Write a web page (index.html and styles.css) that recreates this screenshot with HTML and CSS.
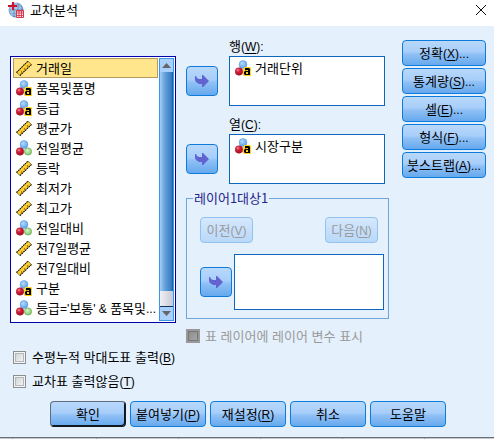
FILE: index.html
```html
<!DOCTYPE html>
<html lang="ko">
<head>
<meta charset="utf-8">
<title>교차분석</title>
<link rel="stylesheet" href="styles.css">
</head>
<body>
<svg class="defs" aria-hidden="true">
  <defs>
    <radialGradient id="blue" cx=".4" cy=".35" r=".65"><stop offset="0" stop-color="#b5dcff"/><stop offset="1" stop-color="#5c9fe4"/></radialGradient>
    <radialGradient id="red" cx=".35" cy=".3" r=".7"><stop offset="0" stop-color="#f08a98"/><stop offset=".4" stop-color="#d02038"/><stop offset="1" stop-color="#a80c22"/></radialGradient>
    <radialGradient id="green" cx=".4" cy=".35" r=".65"><stop offset="0" stop-color="#d4f5c0"/><stop offset="1" stop-color="#86c870"/></radialGradient>
    <linearGradient id="globe" x1="0" y1="0" x2="1" y2="1"><stop offset="0" stop-color="#a9c8e8"/><stop offset="1" stop-color="#2f6dab"/></linearGradient>
    <symbol id="scale" viewBox="0 0 16 16">
      <path d="M.5 12.500 12 1l3.500 3.500L4 15.500z" fill="#ffc820"/>
      <path d="M.5 12.500 12 1l3.500 3.500L4 15.500z" fill="none" stroke="#77704a" stroke-width=".8"/>
      <path d="M.5 12.500 12 1M4 15.500 15.500 4.500" fill="none" stroke="#111" stroke-width="1.100" stroke-dasharray="1.400 1"/>
      <path d="M3 12.500 12.500 3" stroke="#ffe678" stroke-width="1" stroke-dasharray="2 1.500"/>
      <path d="M5 12h1M8 9h1M11 6h1" stroke="#5c4600" stroke-width="1"/>
    </symbol>
    <symbol id="nominal" viewBox="0 0 16 16">
      <circle cx="8" cy="4.500" r="3.900" fill="url(#blue)" stroke="#5b9de0" stroke-width=".6"/>
      <circle cx="4" cy="11.500" r="3.800" fill="url(#red)" stroke="#a51328" stroke-width=".5"/>
      <circle cx="12" cy="11.500" r="3.600" fill="url(#green)" stroke="#61a653" stroke-width=".7"/>
    </symbol>
    <symbol id="string" viewBox="0 0 16 16">
      <circle cx="8" cy="4.500" r="3.900" fill="url(#blue)" stroke="#5b9de0" stroke-width=".6"/>
      <circle cx="4" cy="11.500" r="3.800" fill="url(#red)" stroke="#a51328" stroke-width=".5"/>
      <path d="M9 7h6l1 1v8H9l-1-1v-4z" fill="#ffd21c"/>
      <path d="M10 8h4l1 1v6h-5l-1-1v-2l1-1h3v-1h-1l-2 .5z" fill="#000"/>
      <path d="M11 12h2v2h-2z" fill="#ffd21c"/>
    </symbol>
    <symbol id="arrow" viewBox="0 0 14 14">
      <path d="M0 2h1l1 2 2 1h3V1h1l6 6-6 6H7V10H4L1 8 0 6z" fill="#6262d0"/>
    </symbol>
  </defs>
</svg>
<div class="dialog">
  <header class="titlebar">
    <svg class="app-icon" viewBox="0 0 16 16" aria-hidden="true">
      <circle cx="8" cy="8" r="7.500" fill="url(#globe)"/>
      <path d="M2 10h12M3 13h10M8 1v14M4 4v9M12 3v10M2 6h12" stroke="#dfeaf6" stroke-width=".6"/>
      <path d="M4 0h2v3h3v2H6v3H4V5H0V3h4z" fill="#d0142e"/>
      <path d="M8.500 8.500h7v7h-7z" fill="#fbe4e7" stroke="#d33a50"/>
      <path d="M8 9h8M9 11h6M9 13.500h6M11 9v6M13.500 9v6" stroke="#d33a50" stroke-width=".9"/>
    </svg>
    <h1>교차분석</h1>
    <button class="close" type="button" aria-label="닫기"><svg viewBox="0 0 10 10"><path d="M0 0l10 10M10 0L0 10" stroke="#111" fill="none"/></svg></button>
  </header>
  <main class="content">
    <section class="source">
      <div class="variables">
        <ul class="items" role="listbox" aria-label="변수">
          <li class="item selected" role="option" aria-selected="true"><svg class="icon"><use href="#scale"/></svg>거래일</li>
          <li class="item" role="option"><svg class="icon"><use href="#string"/></svg>품목및품명</li>
          <li class="item" role="option"><svg class="icon"><use href="#string"/></svg>등급</li>
          <li class="item" role="option"><svg class="icon"><use href="#scale"/></svg>평균가</li>
          <li class="item" role="option"><svg class="icon"><use href="#nominal"/></svg>전일평균</li>
          <li class="item" role="option"><svg class="icon"><use href="#scale"/></svg>등락</li>
          <li class="item" role="option"><svg class="icon"><use href="#scale"/></svg>최저가</li>
          <li class="item" role="option"><svg class="icon"><use href="#scale"/></svg>최고가</li>
          <li class="item" role="option"><svg class="icon"><use href="#nominal"/></svg>전일대비</li>
          <li class="item" role="option"><svg class="icon"><use href="#scale"/></svg>전7일평균</li>
          <li class="item" role="option"><svg class="icon"><use href="#scale"/></svg>전7일대비</li>
          <li class="item" role="option"><svg class="icon"><use href="#string"/></svg>구분</li>
          <li class="item" role="option"><svg class="icon"><use href="#nominal"/></svg><span>등급<span class="latin">='</span>보통<span class="latin">' &amp; </span>품목및<span class="latin">...</span></span></li>
        </ul>
        <div class="scrollbar">
          <button class="step" type="button" aria-label="위로"><svg viewBox="0 0 9 5"><path d="M0 5l4.500-5L9 5z" fill="#666"/></svg></button>
          <div class="track"></div>
          <div class="grip"></div>
          <button class="step" type="button" aria-label="아래로"><svg viewBox="0 0 9 5"><path d="M0 0l4.500 5L9 0z" fill="#666"/></svg></button>
        </div>
      </div>
      <div class="options">
        <label class="check"><input type="checkbox"><span>수평누적 막대도표 출력<span class="latin">(<u>B</u>)</span></span></label>
        <label class="check"><input type="checkbox"><span>교차표 출력않음<span class="latin">(<u>T</u>)</span></span></label>
      </div>
    </section>
    <section class="targets">
      <div class="target">
        <button class="btn move" type="button" aria-label="행으로 이동"><svg><use href="#arrow"/></svg></button>
        <div class="field">
          <span class="caption" id="rows">행<span class="latin">(<u>W</u>):</span></span>
          <ul class="box" role="listbox" aria-labelledby="rows"><li class="item" role="option"><svg class="icon"><use href="#string"/></svg>거래단위</li></ul>
        </div>
      </div>
      <div class="target">
        <button class="btn move" type="button" aria-label="열로 이동"><svg><use href="#arrow"/></svg></button>
        <div class="field">
          <span class="caption" id="cols">열<span class="latin">(<u>C</u>):</span></span>
          <ul class="box" role="listbox" aria-labelledby="cols"><li class="item" role="option"><svg class="icon"><use href="#string"/></svg>시장구분</li></ul>
        </div>
      </div>
      <fieldset class="layer">
        <legend>레이어1대상1</legend>
        <div class="paging">
          <button class="btn" type="button" disabled>이전<span class="latin">(<u>V</u>)</span></button>
          <button class="btn" type="button" disabled>다음<span class="latin">(<u>N</u>)</span></button>
        </div>
        <div class="layer-target">
          <button class="btn move" type="button" aria-label="레이어로 이동"><svg><use href="#arrow"/></svg></button>
          <ul class="box" role="listbox" aria-label="레이어"></ul>
        </div>
      </fieldset>
      <label class="check off"><input type="checkbox" disabled><span>표 레이어에 레이어 변수 표시</span></label>
    </section>
    <nav class="settings">
      <button class="btn" type="button">정확<span class="latin">(<u>X</u>)...</span></button>
      <button class="btn" type="button">통계량<span class="latin">(<u>S</u>)...</span></button>
      <button class="btn" type="button">셀<span class="latin">(<u>E</u>)...</span></button>
      <button class="btn" type="button">형식<span class="latin">(<u>F</u>)...</span></button>
      <button class="btn" type="button">붓스트랩<span class="latin">(<u>A</u>)...</span></button>
    </nav>
  </main>
  <footer class="actions">
    <button class="btn default" type="submit">확인</button>
    <button class="btn" type="button">붙여넣기<span class="latin">(<u>P</u>)</span></button>
    <button class="btn" type="button">재설정<span class="latin">(<u>R</u>)</span></button>
    <button class="btn" type="button">취소</button>
    <button class="btn" type="button">도움말</button>
  </footer>
  <div class="sheet-edge"></div>
</div>
</body>
</html>
```
FILE: styles.css
```css
* { box-sizing: border-box; }

body {
  margin: 0;
  background: #e4f0fc;
  color: #000;
  font: 13px/16px "Noto Sans CJK KR", sans-serif;
}

ul { margin: 0; padding: 0; list-style: none; }

button {
  padding: 0;
  font: inherit;
  color: inherit;
}

.defs { position: absolute; width: 0; height: 0; }

.latin {
  font-family: "Liberation Sans", sans-serif;
  font-size: 12px;
  line-height: 1;
  white-space: pre;
}

u { text-underline-offset: 2px; }

.dialog {
  display: flex;
  flex-direction: column;
  min-height: 100vh;
}

.titlebar {
  display: flex;
  align-items: center;
  gap: 6px;
  height: 26px;
  padding: 0 8px 6px;
  background: #fff;
}

.app-icon { width: 16px; height: 16px; }

.titlebar h1 {
  flex: 1;
  margin: 0;
  font-size: 13px;
  font-weight: 400;
}

.close {
  width: 10px;
  height: 10px;
  border: 0;
  background: none;
}

.close svg { display: block; width: 10px; height: 10px; }

.content {
  display: grid;
  grid-template-columns: minmax(0, 166fr) minmax(0, 203fr) 87px;
  gap: 10px;
  padding: 12px 8px 12px 10px;
}

.source { padding-top: 18px; }

.variables {
  display: flex;
  gap: 1px;
  height: 267px;
  padding: 1px;
  border: 1px solid #0000a8;
  background: #fff;
}

.items { flex: 1; min-width: 0; padding-left: 1px; }

.item {
  display: flex;
  align-items: center;
  gap: 4px;
  height: 20px;
  padding: 0 2px;
  border: 1px solid transparent;
  white-space: nowrap;
}

.item.selected { border-color: #b39b5e; background: #ffe68c; }

.icon { flex: none; width: 16px; height: 16px; }

.scrollbar {
  display: flex;
  flex-direction: column;
  width: 15px;
  border: 1px solid #3a95ea;
}

.step {
  height: 13px;
  border: 0;
  background: #a9d0fb;
}

.step svg { display: block; width: 9px; height: 5px; margin: 0 auto; }

.track {
  flex: 1;
  background: linear-gradient(90deg, #a4cdf3, #5f9fdc 40%, #3b80c0 85%, #1b5ca0);
}

.grip {
  height: 16px;
  border-bottom: 1px solid #153460;
  background: linear-gradient(90deg, #f0f0f6, #c9c9d6);
}

.options {
  display: flex;
  flex-direction: column;
  gap: 8px;
  padding: 26px 0 0 3px;
}

.check {
  display: flex;
  align-items: center;
  gap: 6px;
  white-space: nowrap;
}

.check input {
  appearance: none;
  flex: none;
  width: 13px;
  height: 13px;
  margin: 0;
  border: 1px solid #8e8f8f;
  background: linear-gradient(135deg, #c8ccd0, #fafafa);
  box-shadow: inset 0 0 0 1px #f4f4f4, inset 0 0 0 2px #b4b8bc;
}

.check.off {
  gap: 5px;
  margin-top: 9px;
  color: #9a9a9a;
}

.check.off input {
  width: 14px;
  height: 14px;
  border: 2px solid #999;
  background: linear-gradient(135deg, #8a8a8a, #a8a8a8);
  box-shadow: inset 0 0 0 1px #777;
}

.target { display: flex; gap: 11px; padding-right: 4px; }

.target + .target { margin-top: 10px; }

.target .move { margin-top: 28px; }

.field { flex: 1; min-width: 0; }

.caption { display: block; height: 18px; }

.box {
  height: 50px;
  padding: 1px 2px;
  border: 1px solid #0d67bd;
  background: #fff;
}

.btn {
  height: 26px;
  border: 1px solid #0c7bdc;
  border-radius: 4px;
  background: linear-gradient(#b9d8fb, #a7cefa 45%, #90c0f5 55%, #66a9ed);
  white-space: nowrap;
}

.btn:disabled {
  border-color: #91c3f0;
  background: linear-gradient(#d5e8fd, #b9d8f9);
  color: #9a9a9a;
}

.move { flex: none; width: 32px; height: 30px; }

.move svg { display: block; width: 14px; height: 14px; margin: 0 auto; }

.layer {
  min-width: 0;
  margin: 6px 0 0;
  padding: 11px 4px 8px 13px;
  border: 1px solid #70a5dc;
}

.layer legend {
  margin-left: -7px;
  padding: 0 1px;
  color: #24248c;
}

.paging {
  display: flex;
  justify-content: space-between;
  padding-right: 6px;
}

.paging .btn { width: 53px; }

.layer-target {
  display: flex;
  align-items: center;
  gap: 2px;
  margin-top: 11px;
}

.layer-target .box { flex: 1; height: 56px; }

.settings {
  display: flex;
  flex-direction: column;
  gap: 2px;
  padding: 2px 0 0 3px;
}

.actions {
  display: grid;
  grid-template-columns: repeat(5, minmax(0, 76px));
  justify-content: center;
  gap: 4px;
  padding: 0 0 10px 2px;
}

.btn.default {
  border-color: #5d6d80 #101820 #101820 #5d6d80;
  box-shadow: inset -1px -1px 0 #101820;
}

.sheet-edge {
  height: 2px;
  margin-top: auto;
  border-top: 1px solid #6c7076;
  background: repeating-linear-gradient(90deg, #c3c8d0 0 81px, #8fa3c0 81px 82px) 15px 0;
}
```
